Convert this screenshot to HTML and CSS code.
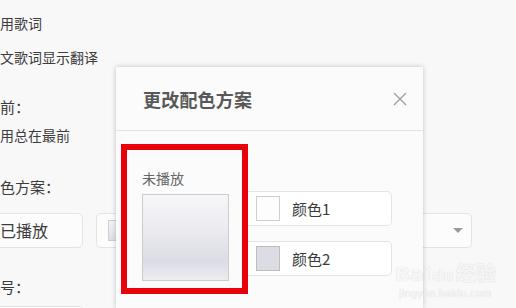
FILE: index.html
```html
<!DOCTYPE html>
<html lang="zh-CN">
<head>
<meta charset="utf-8">
<link rel="stylesheet" href="styles.css">
</head>
<body>
<div class="settings">
  <div class="opt l1">用歌词</div>
  <div class="opt l2">文歌词显示翻译</div>
  <div class="head h1">前：</div>
  <div class="opt l3">用总在最前</div>
  <div class="head h2">色方案：</div>
  <div class="scheme-row">
    <div class="box played">已播放</div>
    <div class="box select">
      <span class="mini-swatch"></span>
      <span class="arrow"></span>
    </div>
  </div>
  <div class="head h3">号：</div>
  <div class="next"></div>
</div>

<div class="dialog">
  <div class="dialog-head">
    <span class="dialog-title">更改配色方案</span>
    <svg class="close" width="14" height="14" viewBox="0 0 14 14"><path d="M1 1L13 13M13 1L1 13" stroke="#9a9a9a" stroke-width="1.2" fill="none"/></svg>
  </div>
  <div class="dialog-body">
    <div class="preview">
      <div class="preview-label">未播放</div>
      <div class="preview-swatch"></div>
    </div>
    <div class="colors">
      <div class="color-row"><span class="sw sw1"></span><span class="cname">颜色1</span></div>
      <div class="color-row"><span class="sw sw2"></span><span class="cname">颜色2</span></div>
    </div>
  </div>
</div>

<div class="watermark">
  <div class="wm-top">Bai<span class="wm-du">du</span>经验</div>
  <div class="wm-url">jingyan.baidu.com</div>
</div>
</body>
</html>
```

FILE: styles.css
```css
html, body {
  margin: 0;
  padding: 0;
}
body {
  width: 516px;
  height: 308px;
  overflow: hidden;
  background: #f8f8f8;
  font-family: "Noto Sans CJK SC", "Noto Sans", sans-serif;
  color: #3c3c3c;
  position: relative;
}
.settings {
  display: flex;
  flex-direction: column;
  padding-top: 13px;
  font-size: 14px;
  line-height: 20px;
}
.l2 { margin-top: 14px; }
.h1 { margin-top: 30px; }
.l3 { margin-top: 8px; }
.h2 { margin-top: 32px; }
.scheme-row {
  margin-top: 16px;
  display: flex;
  gap: 13px;
}
.h3 { margin-top: 29px; }
.head { font-size: 15px; }
.box {
  height: 35px;
  box-sizing: border-box;
  border: 1px solid #e4e4e4;
  border-radius: 5px;
  background: #fcfcfc;
}
.played {
  width: 96px;
  margin-left: -13px;
  padding-left: 12px;
  font-size: 16px;
  line-height: 33px;
}
.select {
  width: 376px;
  display: flex;
  align-items: center;
  padding-left: 11px;
}
.mini-swatch {
  width: 24px;
  height: 21px;
  border: 1px solid #cfcfcf;
  background: linear-gradient(#f4f4f6, #dedee6);
  box-sizing: border-box;
}
.arrow {
  margin-left: auto;
  margin-right: 8px;
  width: 0;
  height: 0;
  border-left: 5px solid transparent;
  border-right: 5px solid transparent;
  border-top: 5px solid #9a9a9a;
}
.next {
  margin-top: 9px;
  width: 96px;
  height: 2px;
  margin-left: -13px;
  border-top: 1px solid #e4e4e4;
  border-radius: 5px 5px 0 0;
  background: #fcfcfc;
}

.dialog {
  position: absolute;
  left: 116px;
  top: 67px;
  width: 307px;
  height: 241px;
  background: #fbfbfb;
  box-shadow: 0 0 5px rgba(0,0,0,0.22);
}
.dialog-head {
  height: 64px;
  box-sizing: border-box;
  border-bottom: 1px solid #e2e2e2;
  display: flex;
  align-items: center;
  padding: 0 16px 0 27px;
}
.dialog-title {
  font-size: 18px;
  font-weight: bold;
  color: #585858;
  letter-spacing: 0.2px;
}
.close {
  margin-left: auto;
  margin-top: 1px;
}
.dialog-body {
  display: flex;
  align-items: flex-start;
  padding: 13px 0 0 5px;
}
.preview {
  width: 127px;
  height: 150px;
  box-sizing: border-box;
  border: 6px solid #e8000a;
  padding: 18px 0 0 15px;
}
.preview-label {
  font-size: 14px;
  line-height: 20px;
  color: #666;
}
.preview-swatch {
  margin-top: 6px;
  width: 87px;
  height: 87px;
  box-sizing: border-box;
  border: 1px solid #cccccc;
  background: linear-gradient(#f7f7f9 0%, #e9e9ef 45%, #dcdce6 78%, #ececf1 100%);
}
.colors {
  margin-top: 47px;
  display: flex;
  flex-direction: column;
  gap: 15px;
}
.color-row {
  width: 144px;
  height: 35px;
  box-sizing: border-box;
  border: 1px solid #e4e4e4;
  border-left: none;
  border-radius: 0 5px 5px 0;
  background: #fff;
  display: flex;
  align-items: center;
  padding-left: 8px;
}
.sw {
  width: 24px;
  height: 25px;
  box-sizing: border-box;
  border: 1px solid #cfcfcf;
}
.sw1 { background: #fdfdfd; }
.sw2 { background: #dcdce4; border-color: #bdbdbd; }
.cname {
  margin-left: 12px;
  font-size: 15px;
  color: #3a3a3a;
}

.watermark {
  position: absolute;
  left: 395px;
  top: 262px;
  color: #f6f6f6;
  text-shadow: 0 0 1px #cfcfcf;
  font-family: "DejaVu Sans", sans-serif;
}
.wm-top {
  font-size: 20px;
  font-weight: bold;
  line-height: 24px;
  white-space: nowrap;
}
.wm-du {
  font-size: 15px;
  margin: 0 2px;
}
.wm-url {
  font-size: 10px;
  line-height: 12px;
  margin-left: 4px;
}
```
